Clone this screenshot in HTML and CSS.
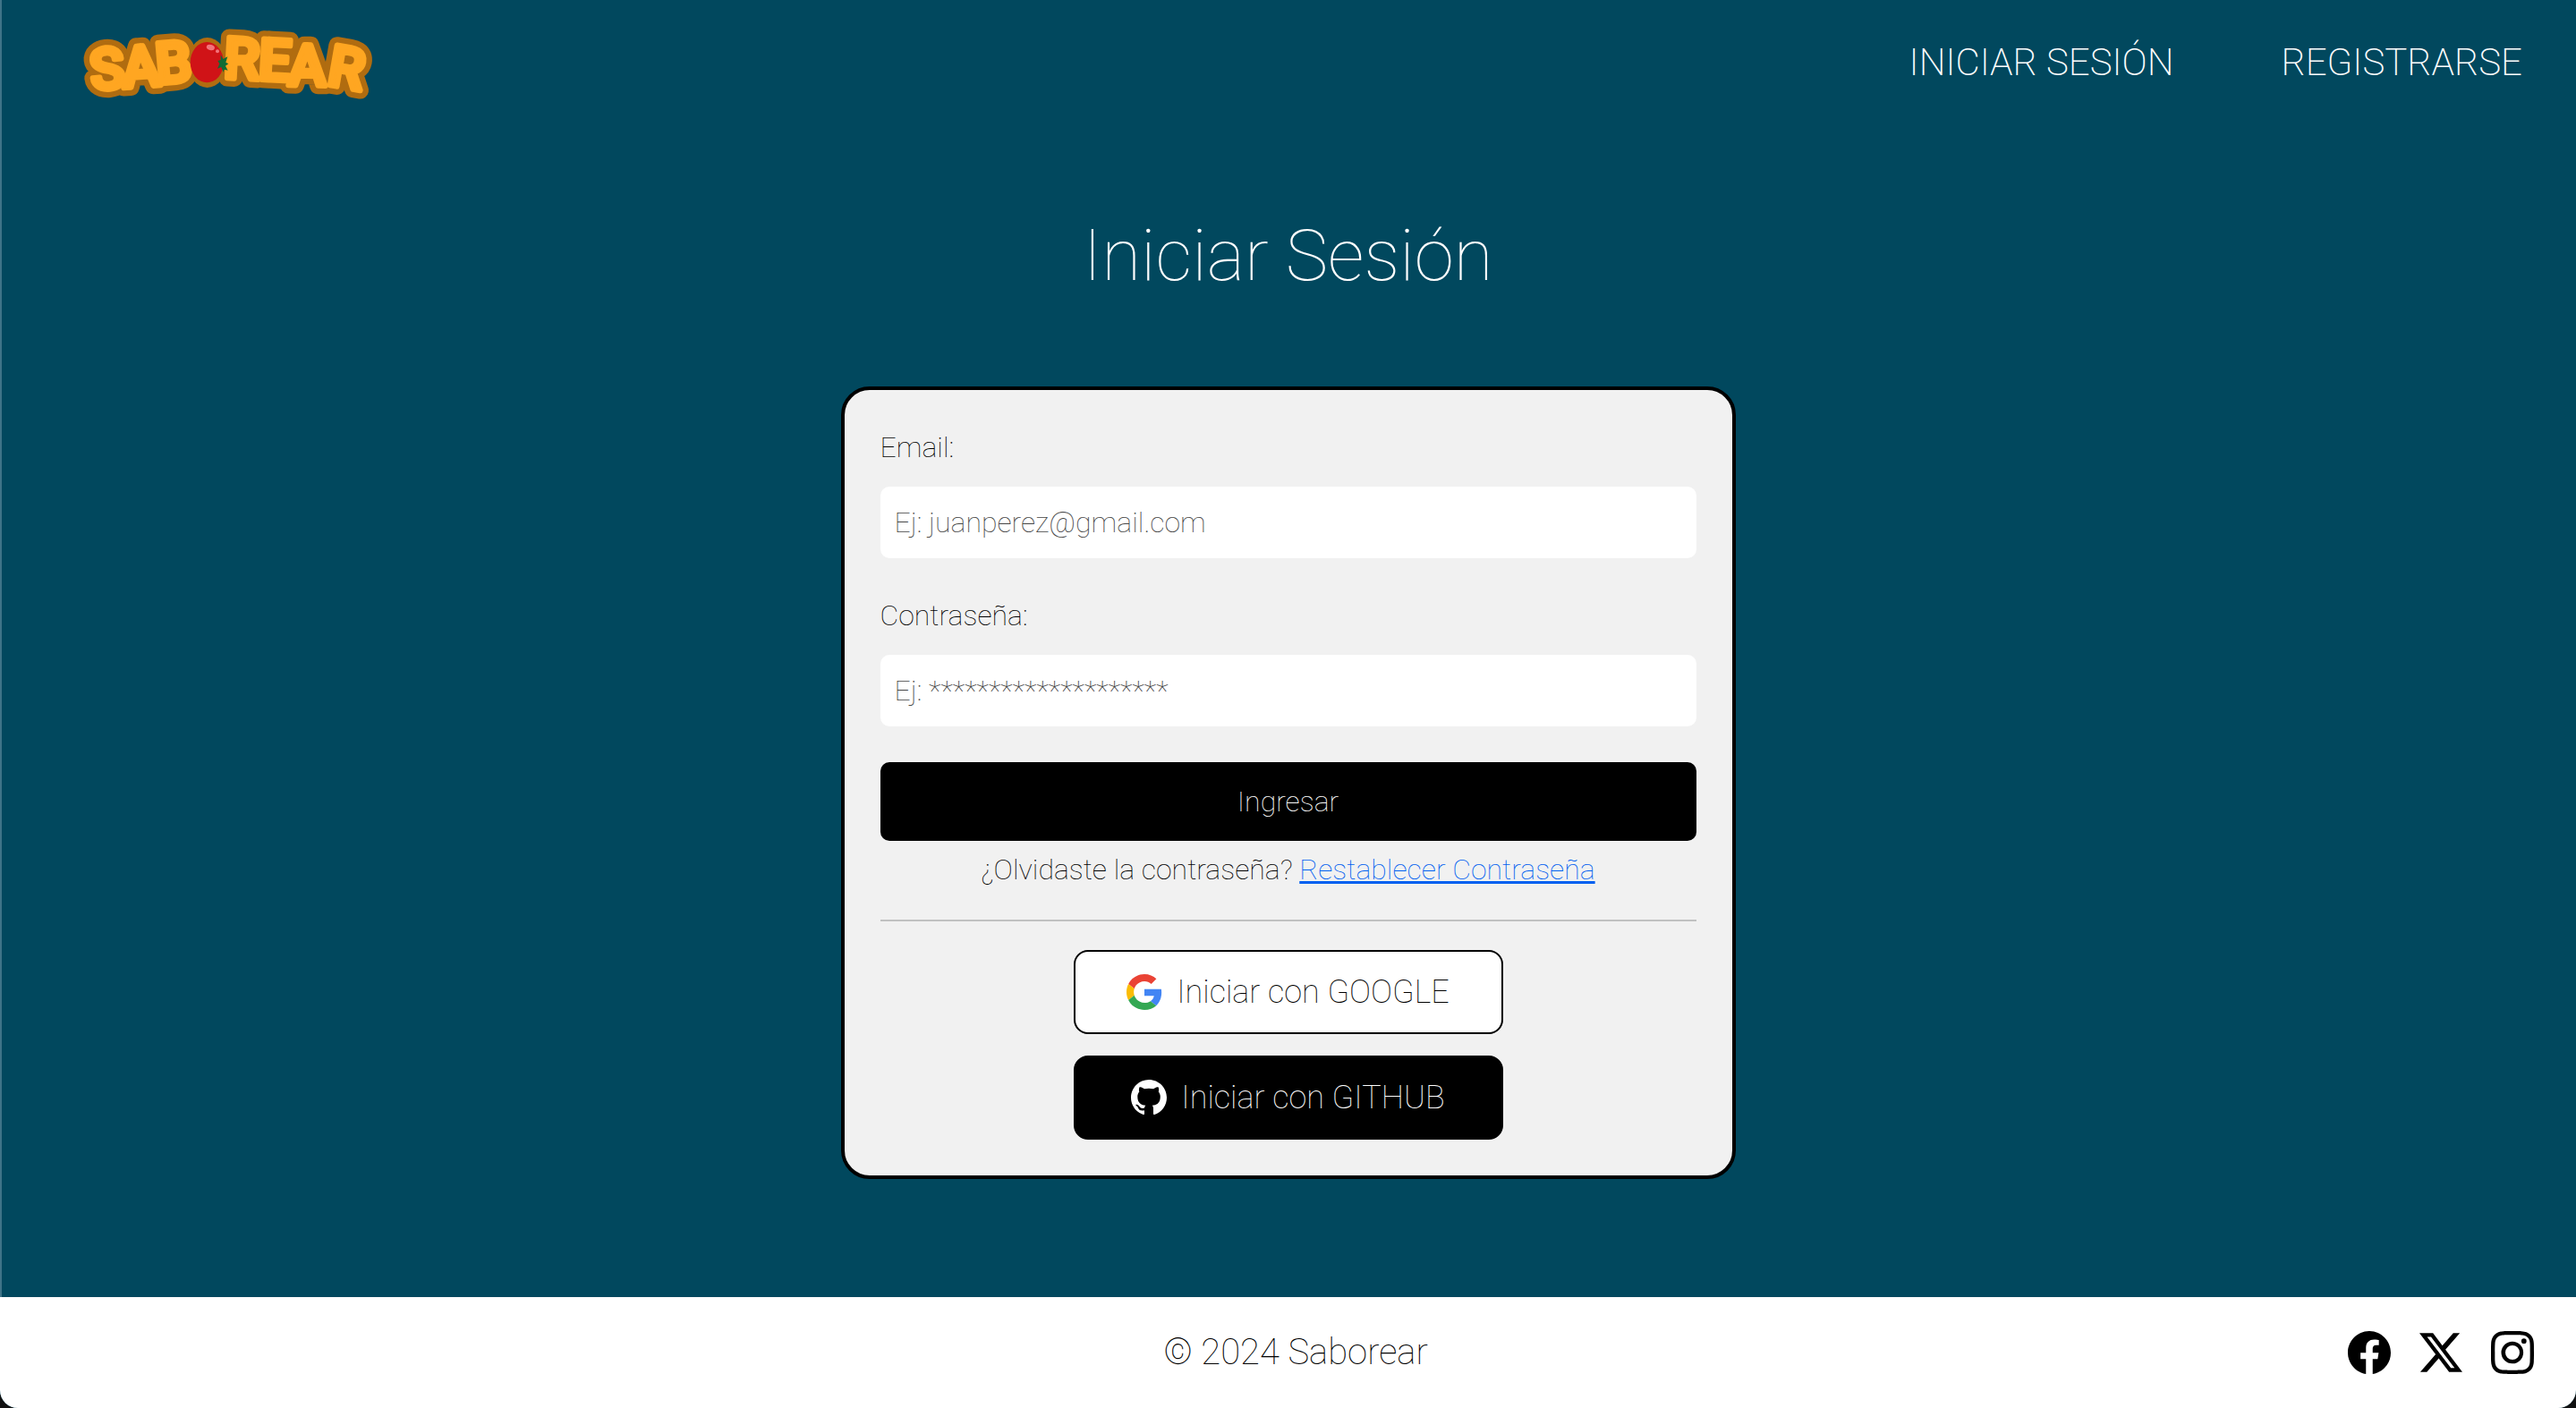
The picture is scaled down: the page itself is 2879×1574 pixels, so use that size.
FILE: index.html
```html
<!DOCTYPE html>
<html lang="es">
<head>
<meta charset="utf-8">
<meta name="viewport" content="width=device-width, initial-scale=1">
<title>Iniciar Sesión - Saborear</title>
<link rel="stylesheet" href="styles.css">
</head>
<body>
<header class="header">
  <a class="logo" href="#" aria-label="Saborear">
    <svg class="logo-art" viewBox="48 58 960 248" aria-hidden="true">
      <defs>
        <g id="letters">
          <text transform="translate(126 270) rotate(-6)">S</text>
          <text transform="translate(237 262) rotate(-4)">A</text>
          <text transform="translate(348 248) rotate(-5)">B</text>
          <text transform="translate(568 236) rotate(3)">R</text>
          <text transform="translate(678 241) rotate(3)">E</text>
          <text transform="translate(789 259) rotate(1)">A</text>
          <text transform="translate(912 266) rotate(10)">R</text>
        </g>
      </defs>
      <use href="#letters" class="logo-rim"/>
      <ellipse cx="455" cy="182" rx="66" ry="84" fill="#b06c10"/>
      <use href="#letters" class="logo-fill"/>
      <ellipse cx="454" cy="181" rx="56" ry="68" fill="#d01317"/>
      <ellipse cx="466" cy="131" rx="14" ry="9" fill="#f2747b" transform="rotate(15 466 131)"/>
      <circle cx="489" cy="144" r="6" fill="#f2747b"/>
      <path d="M500 156l8 14 15-8-6 19 9 5-10 7 8 15-12-3-3 9-7-17-13 5 7-16-6-10 10-3z" fill="#0f6b34"/>
    </svg>
  </a>
  <nav class="nav">
    <a href="#">INICIAR SESIÓN</a>
    <a href="#">REGISTRARSE</a>
  </nav>
</header>

<main class="main">
  <h1 class="title">Iniciar Sesión</h1>
  <form class="card">
    <label class="label" for="email">Email:</label>
    <input class="field" id="email" type="email" placeholder="Ej: juanperez@gmail.com">
    <label class="label" for="password">Contraseña:</label>
    <input class="field" id="password" type="password" placeholder="Ej: ********************">
    <button class="submit" type="submit">Ingresar</button>
    <p class="forgot">¿Olvidaste la contraseña? <a href="#">Restablecer Contraseña</a></p>
    <hr class="divider">
    <div class="providers">
      <button class="provider" type="button">
        <svg class="provider-icon" viewBox="0 0 48 48" aria-hidden="true">
          <path fill="#EA4335" d="M24 9.5c3.54 0 6.71 1.22 9.21 3.6l6.85-6.85C35.9 2.38 30.47 0 24 0 14.62 0 6.51 5.38 2.56 13.22l7.98 6.19C12.43 13.72 17.74 9.5 24 9.5z"/>
          <path fill="#4285F4" d="M46.98 24.55c0-1.57-.15-3.09-.38-4.55H24v9.02h12.94c-.58 2.96-2.26 5.48-4.78 7.18l7.73 6c4.51-4.18 7.09-10.36 7.09-17.65z"/>
          <path fill="#FBBC05" d="M10.53 28.59c-.48-1.45-.76-2.99-.76-4.59s.27-3.14.76-4.59l-7.98-6.19C.92 16.46 0 20.12 0 24c0 3.88.92 7.54 2.56 10.78l7.97-6.19z"/>
          <path fill="#34A853" d="M24 48c6.48 0 11.93-2.13 15.89-5.81l-7.73-6c-2.15 1.45-4.92 2.3-8.16 2.3-6.26 0-11.57-4.22-13.47-9.91l-7.98 6.19C6.51 42.62 14.62 48 24 48z"/>
        </svg>
        Iniciar con GOOGLE
      </button>
      <button class="provider provider-dark" type="button">
        <svg class="provider-icon" viewBox="0 0 16 16" fill="currentColor" aria-hidden="true">
          <path d="M8 0C3.58 0 0 3.58 0 8c0 3.54 2.29 6.53 5.47 7.59.4.07.55-.17.55-.38 0-.19-.01-.82-.01-1.49-2.01.37-2.53-.49-2.69-.94-.09-.23-.48-.94-.82-1.13-.28-.15-.68-.52-.01-.53.63-.01 1.08.58 1.23.82.72 1.21 1.87.87 2.33.66.07-.52.28-.87.51-1.07-1.78-.2-3.64-.89-3.64-3.95 0-.87.31-1.59.82-2.15-.08-.2-.36-1.02.08-2.12 0 0 .67-.21 2.2.82.64-.18 1.32-.27 2-.27s1.36.09 2 .27c1.53-1.04 2.2-.82 2.2-.82.44 1.1.16 1.92.08 2.12.51.56.82 1.27.82 2.15 0 3.07-1.87 3.75-3.65 3.95.29.25.54.73.54 1.48 0 1.07-.01 1.93-.01 2.2 0 .21.15.46.55.38A8.01 8.01 0 0 0 16 8c0-4.42-3.58-8-8-8"/>
        </svg>
        Iniciar con GITHUB
      </button>
    </div>
  </form>
</main>

<footer class="footer">
  <p class="copyright">© 2024 Saborear</p>
  <div class="social">
    <a href="#" aria-label="Facebook"><svg viewBox="0 0 16 16" fill="currentColor"><path d="M16 8.049c0-4.446-3.582-8.05-8-8.05C3.58 0-.002 3.603-.002 8.05c0 4.017 2.926 7.347 6.75 7.951v-5.625h-2.03V8.05H6.75V6.275c0-2.017 1.195-3.131 3.022-3.131.876 0 1.791.157 1.791.157v1.98h-1.009c-.993 0-1.303.621-1.303 1.258v1.51h2.218l-.354 2.326H9.25V16c3.824-.604 6.75-3.934 6.75-7.951"/></svg></a>
    <a href="#" aria-label="X"><svg viewBox="0 0 16 16" fill="currentColor"><path d="M12.6.75h2.454l-5.36 6.142L16 15.25h-4.937l-3.867-5.07-4.425 5.07H.316l5.733-6.57L0 .75h5.063l3.495 4.633L12.601.75Zm-.86 13.028h1.36L4.323 2.145H2.865z"/></svg></a>
    <a href="#" aria-label="Instagram"><svg viewBox="0 0 16 16" fill="currentColor"><path d="M8 0C5.829 0 5.556.01 4.703.048 3.85.088 3.269.222 2.76.42a3.900 3.900 0 0 0-1.417.923A3.900 3.900 0 0 0 .42 2.760C.222 3.268.087 3.850.048 4.700.01 5.555 0 5.827 0 8.001c0 2.172.01 2.444.048 3.297.04.852.174 1.433.372 1.942.205.526.478.972.923 1.417.444.445.89.719 1.416.923.51.198 1.090.333 1.942.372C5.555 15.990 5.827 16 8 16s2.444-.01 3.298-.048c.851-.04 1.434-.174 1.943-.372a3.900 3.900 0 0 0 1.416-.923c.445-.445.718-.891.923-1.417.197-.509.332-1.090.372-1.942C15.990 10.445 16 10.173 16 8s-.01-2.445-.048-3.299c-.04-.851-.175-1.433-.372-1.941a3.900 3.900 0 0 0-.923-1.417A3.900 3.900 0 0 0 13.240.42c-.51-.198-1.092-.333-1.943-.372C10.443.01 10.172 0 7.998 0zm-.717 1.442h.718c2.136 0 2.389.007 3.232.046.78.035 1.204.166 1.486.275.373.145.640.319.92.599s.453.546.598.92c.11.281.24.705.275 1.485.039.843.047 1.096.047 3.231s-.008 2.389-.047 3.232c-.035.78-.166 1.203-.275 1.485a2.500 2.500 0 0 1-.599.919c-.28.28-.546.453-.92.598-.280.11-.704.240-1.485.276-.843.038-1.096.047-3.232.047s-2.390-.009-3.233-.047c-.78-.036-1.203-.166-1.485-.276a2.500 2.500 0 0 1-.92-.598 2.500 2.500 0 0 1-.6-.92c-.109-.281-.240-.705-.275-1.485-.038-.843-.046-1.096-.046-3.233s.008-2.388.046-3.231c.036-.78.166-1.204.276-1.486.145-.373.319-.64.599-.92s.546-.453.920-.598c.282-.110.705-.240 1.485-.276.738-.034 1.024-.044 2.515-.045zm4.988 1.328a.96.96 0 1 0 0 1.920.96.96 0 0 0 0-1.920m-4.270 1.122a4.109 4.109 0 1 0 0 8.217 4.109 4.109 0 0 0 0-8.217m0 1.441a2.667 2.667 0 1 1 0 5.334 2.667 2.667 0 0 1 0-5.334"/></svg></a>
  </div>
</footer>
</body>
</html>
```
FILE: styles.css
```css
*, *::before, *::after {
  box-sizing: border-box;
}

html {
  background: #111;
}

body {
  display: flex;
  flex-direction: column;
  min-height: 100vh;
  margin: 0;
  overflow: hidden;
  border-radius: 0 0 20px 20px;
  background: #01485e;
  box-shadow: inset 2px 0 #3f7488;
  font-family: Roboto, "Liberation Sans", sans-serif;
  font-size: 32px;
  font-weight: 100;
  line-height: 48px;
  color: #000;
}

.header {
  display: flex;
  align-items: center;
  justify-content: space-between;
  height: 140px;
  padding: 0 60px 0 96px;
}

.logo-art {
  display: block;
  width: 320px;
  height: 84px;
  overflow: visible;
}

.logo-art text {
  font-family: Roboto, "Liberation Sans", sans-serif;
  font-size: 192px;
  font-weight: 500;
  text-anchor: middle;
  stroke-linejoin: round;
}

.logo-rim {
  fill: #b06c10;
  stroke: #b06c10;
  stroke-width: 56px;
}

.logo-fill {
  fill: #ffa621;
  stroke: #ffa621;
  stroke-width: 18px;
}

.nav {
  display: flex;
  gap: 120px;
}

.nav a {
  color: #fff;
  font-size: 42px;
  font-weight: 200;
  text-decoration: none;
}

.main {
  display: flex;
  flex: 1;
  flex-direction: column;
  align-items: center;
  gap: 98px;
  padding: 98px 32px 132px;
}

.title {
  margin: 0;
  color: #fff;
  font-size: 80px;
  font-weight: 100;
  line-height: 96px;
}

.card {
  display: flex;
  flex-direction: column;
  width: 100%;
  max-width: 1000px;
  padding: 40px;
  border: 4px solid #000;
  border-radius: 32px;
  background: #f1f1f1;
}

.label {
  margin-bottom: 20px;
}

.field {
  height: 80px;
  margin: 0 0 40px;
  padding: 0 16px;
  border: 0;
  border-radius: 10px;
  background: #fff;
  color: #000;
  font: inherit;
}

.field::placeholder {
  color: #444;
  opacity: 1;
}

.submit {
  height: 88px;
  border: 0;
  border-radius: 10px;
  background: #000;
  color: #fff;
  font: inherit;
}

.forgot {
  margin: 8px 0 32px;
  text-align: center;
}

.forgot a {
  color: #0060f0;
}

.divider {
  width: 100%;
  height: 2px;
  margin: 0 0 32px;
  border: 0;
  background: #c0c1c1;
}

.providers {
  display: flex;
  flex-direction: column;
  align-items: center;
  gap: 24px;
}

.provider {
  display: flex;
  align-items: center;
  justify-content: center;
  gap: 16px;
  width: 480px;
  max-width: 100%;
  height: 94px;
  padding: 0;
  border: 2px solid #000;
  border-radius: 16px;
  background: #fff;
  color: #000;
  font: inherit;
  font-size: 36px;
}

.provider-dark {
  background: #000;
  color: #fff;
}

.provider-icon {
  width: 40px;
  height: 40px;
}

.footer {
  display: grid;
  grid-template-columns: 1fr auto 1fr;
  align-items: center;
  height: 124px;
  padding: 0 47px 0 64px;
  background: #fff;
}

.copyright {
  grid-column: 2;
  margin: 0;
  font-size: 40px;
}

.social {
  display: flex;
  justify-content: flex-end;
  gap: 32px;
}

.social a {
  color: #000;
}

.social svg {
  display: block;
  width: 48px;
  height: 48px;
}
```
